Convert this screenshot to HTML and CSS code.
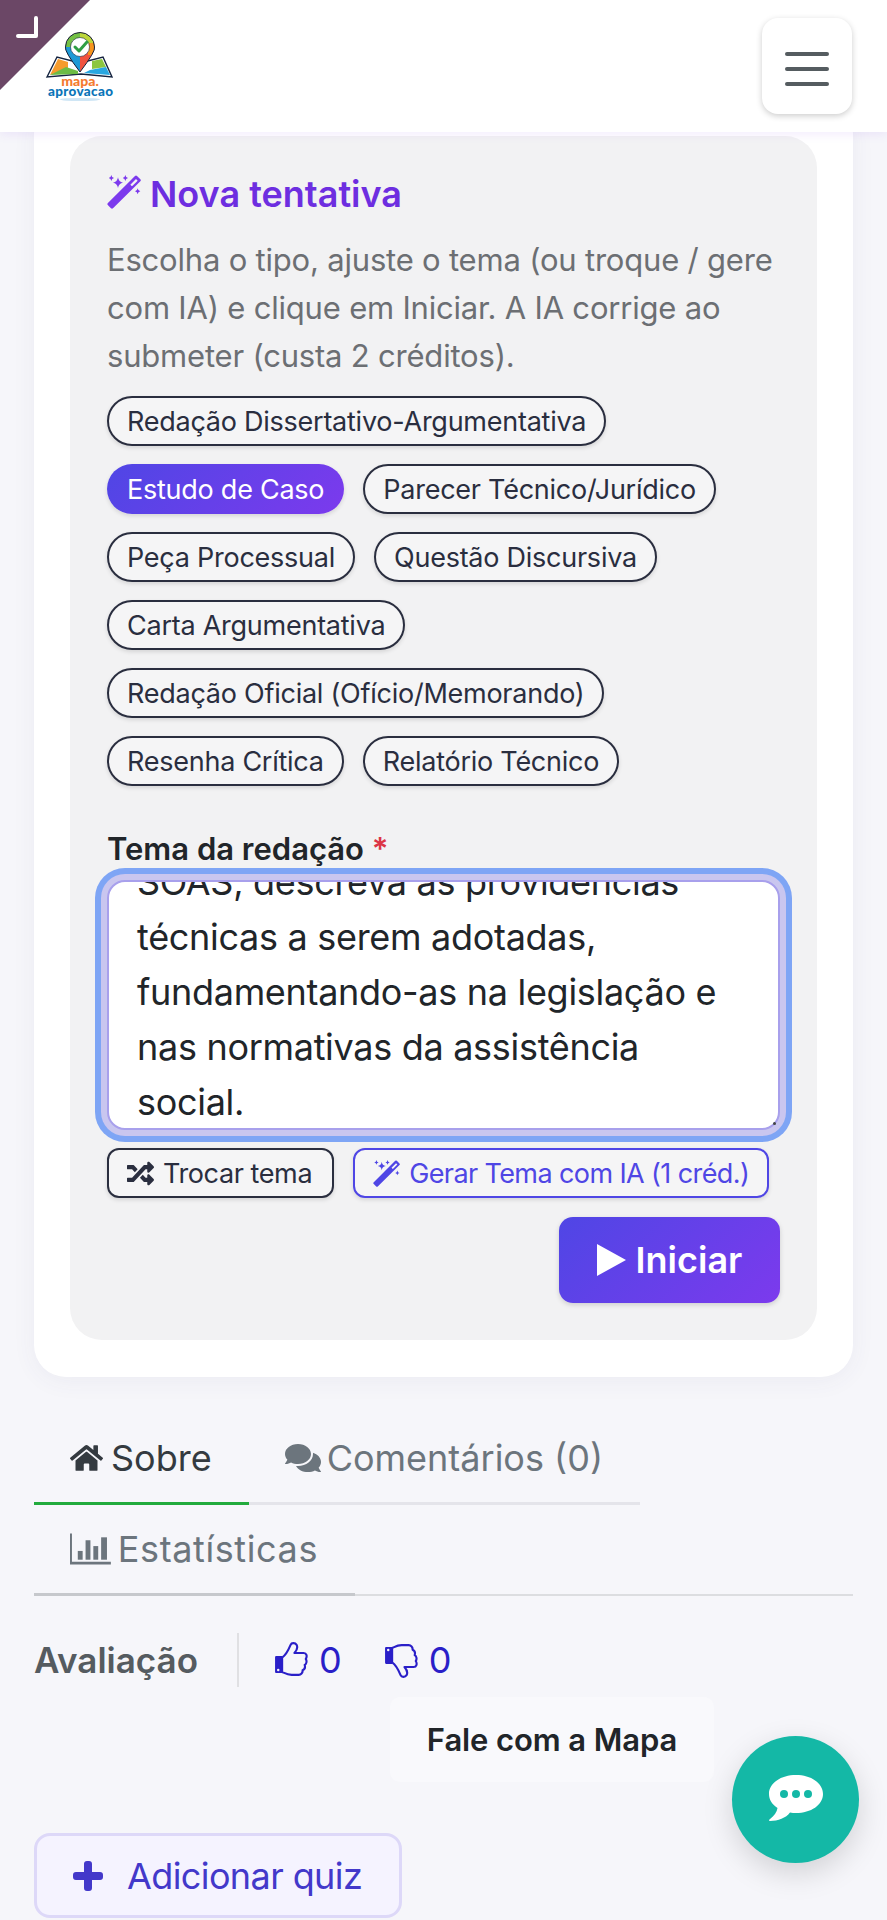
FILE: index.html
```html
<!DOCTYPE html>
<html lang="pt-BR">
<head>
  <meta charset="UTF-8">
  <meta name="viewport" content="width=device-width, initial-scale=1.0">
  <title>Nova tentativa - Mapa da Aprovação</title>
  <link rel="stylesheet" href="styles.css">
</head>
<body>
  <svg class="defs" width="0" height="0" aria-hidden="true">
    <defs>
      <symbol id="i-magic" viewBox="0 0 102 102">
        <path d="M2 85 L84 3 Q87 0 90 3 L100 13 Q103 16 100 19 L18 100 Q15 102 12 100 L3 91 Q0 88 2 85 Z M70 29 L87 12 L92 17 L75 34 Z" fill-rule="evenodd"/>
        <path d="M33 7 Q35 21 48 23 Q35 25 33 39 Q31 25 18 23 Q31 21 33 7 Z M13 0 Q14 8 21 9 Q14 10 13 18 Q12 10 5 9 Q12 8 13 0 Z M55 0 Q56 8 63 9 Q56 10 55 18 Q54 10 47 9 Q54 8 55 0 Z M92 40 Q93 48 100 49 Q93 50 92 58 Q91 50 84 49 Q91 48 92 40 Z"/>
      </symbol>
      <symbol id="i-thumb" viewBox="0 0 102 102">
        <path d="M3 43 Q3 40 6 40 H23 V88 H6 Q3 88 3 85 Z M12 76 A3.500 3.500 0 1 0 12.010 83 A3.500 3.500 0 1 0 12 76 Z" fill-rule="evenodd"/>
        <path d="M23 44 C32 38 42 20 47 8 C50 1 60 2 64 8 C68 15 64 24 58 31 L84 31 C92 31 95 40 90 48 C94 54 92 62 87 65 C89 72 86 78 81 80 C82 88 76 93 70 93 L50 93 C38 93 30 88 23 85 Z" fill="none" stroke="currentColor" stroke-width="6" stroke-linejoin="round"/>
      </symbol>
    </defs>
  </svg>

  <header class="topbar">
    <a class="corner" href="#" aria-label="Recolher">
      <svg width="24" height="24" viewBox="0 0 24 24"><path d="M21 3 V21 H3" fill="none" stroke="#fff" stroke-width="4" stroke-linecap="round" stroke-linejoin="round"/></svg>
    </a>
    <svg class="logo" width="85" height="90" viewBox="37 20 85 90">
      <defs>
        <clipPath id="pinClip"><path d="M80 71 Q64 50 65.500 46 A14.500 14.500 0 1 1 94.500 46 Q96 50 80 71 Z"/></clipPath>
      </defs>
      <path d="M47 76 L57 56 L80 62 L103 56 L112 76 L81 73 Z" fill="#fff" stroke="#14233f" stroke-width="1.400"/>
      <path d="M50 74 L58 58 L68 61 L68 68 Z" fill="#f59b2c"/>
      <path d="M50 74 L66 66 L78 70 L78 73 Z" fill="#6cbb45"/>
      <path d="M92 60 L102 58 L106 66 L92 68 Z" fill="#8cc63f"/>
      <path d="M90 69 L106 66 L110 74 L84 72 Z" fill="#29a7e0"/>
      <g clip-path="url(#pinClip)">
        <rect x="64" y="30" width="32" height="42" fill="#f0523f"/>
        <rect x="64" y="44" width="16" height="28" fill="#1f9ad6"/>
        <rect x="64" y="30" width="16" height="16" fill="#74c044"/>
        <rect x="80" y="30" width="16" height="14" fill="#bcd63a"/>
        <rect x="88" y="42" width="8" height="12" fill="#f7941d"/>
      </g>
      <path d="M80 71 Q64 50 65.500 46 A14.500 14.500 0 1 1 94.500 46 Q96 50 80 71 Z" fill="none" stroke="#14233f" stroke-width="1"/>
      <circle cx="80" cy="46" r="9.500" fill="#fff" stroke="#14233f" stroke-width=".6"/>
      <path d="M75 46 L79 50 L87 41" fill="none" stroke="#2f9e44" stroke-width="3" stroke-linecap="round" stroke-linejoin="round"/>
      <text class="logo-top" x="80" y="85" text-anchor="middle">mapa.</text>
      <text class="logo-bottom" x="80.500" y="95" text-anchor="middle" textLength="65">aprovacao</text>
      <ellipse cx="80" cy="98.500" rx="20" ry="1.600" fill="#cfe6f5"/>
    </svg>
    <button class="burger" aria-label="Menu"><span></span><span></span><span></span></button>
  </header>

  <main class="page">
    <section class="card">
      <div class="panel">
        <h2 class="panel-title"><svg class="ico-title"><use href="#i-magic"/></svg>Nova tentativa</h2>
        <p class="panel-desc">Escolha o tipo, ajuste o tema (ou troque / gere com IA) e clique em Iniciar. A IA corrige ao submeter (custa 2 créditos).</p>

        <div class="chips">
          <button class="chip">Redação Dissertativo-Argumentativa</button>
          <button class="chip chip-active">Estudo de Caso</button>
          <button class="chip">Parecer Técnico/Jurídico</button>
          <button class="chip">Peça Processual</button>
          <button class="chip">Questão Discursiva</button>
          <button class="chip">Carta Argumentativa</button>
          <button class="chip">Redação Oficial (Ofício/Memorando)</button>
          <button class="chip">Resenha Crítica</button>
          <button class="chip">Relatório Técnico</button>
        </div>

        <label class="field-label">Tema da redação <span class="req">*</span></label>
        <div class="theme-box">
          <div class="theme-text"><div class="theme-lines">SOAS, descreva as providências técnicas a serem adotadas, fundamentando-as na legislação e nas normativas da assistência social.</div></div>
          <span class="grip"></span>
        </div>

        <div class="theme-actions">
          <button class="btn-line btn-dark">
            <svg class="ico-btn" viewBox="0 0 512 512"><path d="M504.971 359.029c9.373 9.373 9.373 24.569 0 33.941l-80 79.984c-15.01 15.01-40.971 4.49-40.971-16.971V416h-58.785a12.004 12.004 0 0 1-8.773-3.812l-70.556-75.596 53.333-57.143L352 336h32v-39.981c0-21.438 25.943-31.998 40.971-16.971l80 79.981zM12 176h84l52.781 56.551 53.333-57.143-70.556-75.596A11.999 11.999 0 0 0 122.785 96H12c-6.627 0-12 5.373-12 12v56c0 6.627 5.373 12 12 12zm372 0v39.984c0 21.46 25.961 31.98 40.971 16.971l80-79.984c9.373-9.373 9.373-24.569 0-33.941l-80-79.981C409.943 24.021 384 34.582 384 56.019V96h-58.785a12.004 12.004 0 0 0-8.773 3.812L96 336H12c-6.627 0-12 5.373-12 12v56c0 6.627 5.373 12 12 12h110.785c3.326 0 6.503-1.381 8.773-3.812L352 176h32z"/></svg>
            Trocar tema
          </button>
          <button class="btn-line btn-indigo">
            <svg class="ico-btn"><use href="#i-magic"/></svg>
            Gerar Tema com IA (1 créd.)
          </button>
        </div>

        <div class="start-row">
          <button class="btn-start">
            <svg class="ico-play" viewBox="0 0 29 32"><path d="M0 0 L29 16 L0 32 Z"/></svg>
            Iniciar
          </button>
        </div>
      </div>
    </section>

    <nav class="tabs">
      <a class="tab tab-active" href="#">
        <svg class="ico-tab" viewBox="0 0 576 512"><path d="M280.37 148.26L96 300.11V464a16 16 0 0 0 16 16l112.06-.29a16 16 0 0 0 15.92-16V368a16 16 0 0 1 16-16h64a16 16 0 0 1 16 16v95.64a16 16 0 0 0 16 16.05L464 480a16 16 0 0 0 16-16V300L295.67 148.26a12.19 12.19 0 0 0-15.3 0zM571.6 251.47L488 182.56V44.05a12 12 0 0 0-12-12h-56a12 12 0 0 0-12 12v72.61L318.47 43a48 48 0 0 0-61 0L4.34 251.47a12 12 0 0 0-1.6 16.9l25.5 31A12 12 0 0 0 45.15 301l235.22-193.74a12.19 12.19 0 0 1 15.3 0L530.9 301a12 12 0 0 0 16.9-1.6l25.5-31a12 12 0 0 0-1.7-16.93z"/></svg>
        Sobre
      </a>
      <a class="tab tab-comments" href="#">
        <svg class="ico-tab ico-wide" viewBox="0 0 576 512"><path d="M416 192c0-88.4-93.1-160-208-160S0 103.6 0 192c0 34.3 14.1 65.9 38 92-13.4 30.2-35.5 54.2-35.8 54.5-2.2 2.3-2.8 5.7-1.5 8.7S4.8 352 8 352c36.6 0 66.9-12.3 88.7-25 32.2 15.7 70.3 25 111.3 25 114.9 0 208-71.6 208-160zm122 220c23.9-26 38-57.7 38-92 0-66.9-53.5-124.2-129.3-148.1.9 6.6 1.3 13.3 1.3 20.1 0 105.9-107.7 192-240 192-10.8 0-21.3-.8-31.7-1.9C207.8 439.6 281.8 480 368 480c41 0 79.1-9.2 111.3-25 21.8 12.7 52.1 25 88.7 25 3.2 0 6.1-1.9 7.3-4.8 1.3-2.9.7-6.3-1.5-8.7-.3-.3-22.4-24.2-35.8-54.5z"/></svg>
        Comentários (0)
      </a>
      <a class="tab tab-last" href="#">
        <svg class="ico-tab ico-chart" viewBox="0 0 42 32"><path d="M0 0 H2 V29 H42 V32 H0 Z"/><rect x="8" y="18" width="5" height="9"/><rect x="16" y="7" width="5" height="20"/><rect x="24" y="13" width="5" height="14"/><rect x="32" y="4" width="6" height="23"/></svg>
        Estatísticas
      </a>
    </nav>

    <div class="rating">
      <span class="rating-label">Avaliação</span>
      <span class="rating-sep"></span>
      <span class="vote"><svg class="ico-vote"><use href="#i-thumb"/></svg>0</span>
      <span class="vote"><svg class="ico-vote ico-down"><use href="#i-thumb"/></svg>0</span>
    </div>

    <button class="btn-quiz">
      <svg class="ico-plus" viewBox="0 0 30 30"><path d="M11 3 Q11 0 14 0 H16 Q19 0 19 3 V11 H27 Q30 11 30 14 V16 Q30 19 27 19 H19 V27 Q19 30 16 30 H14 Q11 30 11 27 V19 H3 Q0 19 0 16 V14 Q0 11 3 11 H11 Z"/></svg>
      Adicionar quiz
    </button>
  </main>

  <div class="chat-hint">Fale com a Mapa</div>
  <button class="chat-fab" aria-label="Fale com a Mapa">
    <svg width="56" height="47" viewBox="0 0 56 47"><path d="M28 0 C43 0 55 8 55 19 C55 30 43 38 28 38 C26 38 24 38 22 37.500 C18 43 10 46 2 46 C1 46 0.500 45 1.500 44.500 C6 41 9 37 9.500 33 C4 29.500 1 24.500 1 19 C1 8 13 0 28 0 Z" fill="#fff"/><circle cx="16" cy="19" r="4" fill="#14b8a6"/><circle cx="28" cy="19" r="4" fill="#14b8a6"/><circle cx="40" cy="19" r="4" fill="#14b8a6"/></svg>
  </button>
</body>
</html>
```

FILE: styles.css
```css
* {
  box-sizing: border-box;
}
body {
  margin: 0;
  background-color: #f6f6fa;
  font-family: Inter, "Noto Sans", sans-serif;
  color: #212529;
}
button {
  font-family: inherit;
  cursor: pointer;
}
.defs {
  position: absolute;
}

/* top bar */
.topbar {
  position: relative;
  z-index: 10;
  height: 132px;
  display: flex;
  align-items: center;
  justify-content: space-between;
  padding: 0 35px 0 37px;
  background: #fff;
  box-shadow: 0 2px 10px rgba(124, 58, 237, 0.1);
}
.corner {
  position: absolute;
  top: 0;
  left: 0;
  width: 90px;
  height: 90px;
  padding: 15px;
  background: #6b4766;
  clip-path: polygon(0 0, 100% 0, 0 100%);
}
.corner svg {
  display: block;
}
.logo-top {
  font: 900 14px Lato, sans-serif;
  fill: #f47b30;
}
.logo-bottom {
  font: 900 13.500px Lato, sans-serif;
  fill: #0b75b9;
}
.burger {
  width: 90px;
  height: 96px;
  display: flex;
  flex-direction: column;
  align-items: center;
  justify-content: center;
  gap: 11px;
  padding: 6px 0 0;
  margin-top: -1px;
  background: #fff;
  border: 0;
  border-radius: 16px;
  box-shadow: 0 2px 6px rgba(0, 0, 0, 0.2);
}
.burger span {
  width: 44px;
  height: 4px;
  background: #555c60;
  border-radius: 2px;
}

/* attempt card */
.page {
  padding: 0 34px;
}
.card {
  margin-top: -30px;
  padding: 34px 36px 37px;
  background: #fff;
  border-radius: 32px;
  box-shadow: 0 4px 24px rgba(70, 70, 120, 0.06);
}
.panel {
  padding: 37px;
  background: #f2f2f3;
  border-radius: 32px;
}
.panel-title {
  display: flex;
  align-items: center;
  gap: 9px;
  margin: 0;
  height: 42px;
  font-size: 36px;
  font-weight: 600;
  color: #6d2ee0;
}
.ico-title {
  width: 34px;
  height: 34px;
  margin-top: -4px;
  fill: #7c3aed;
}
.panel-desc {
  margin: 21px 0 16px;
  font-size: 31px;
  line-height: 48px;
  letter-spacing: -0.2px;
  color: #6c6f73;
}

/* type chips */
.chips {
  display: flex;
  flex-wrap: wrap;
  gap: 18px 19px;
}
.chip {
  height: 50px;
  padding: 0 18px;
  font-size: 27px;
  letter-spacing: -0.25px;
  white-space: nowrap;
  color: #2a2e3f;
  background: #f5f5f6;
  border: 2px solid #2a2e3f;
  border-radius: 25px;
  box-shadow: 0 2px 4px rgba(0, 0, 0, 0.12);
}
.chip-active {
  color: #fff;
  background: linear-gradient(135deg, #4f46e5, #7c3aed);
  border-color: transparent;
  background-origin: border-box;
}

/* theme field */
.field-label {
  display: block;
  margin-top: 40px;
  margin-bottom: 9px;
  font-size: 31px;
  font-weight: 600;
  line-height: 45px;
  color: #212529;
}
.req {
  color: #dc3545;
}
.theme-box {
  position: relative;
  height: 250px;
  background: #fff;
  border: 2px solid #a8a0ec;
  border-radius: 18px;
  box-shadow: 0 0 0 6px #c9c6ef, 0 0 0 12px #7ea5f5;
}
.theme-text {
  height: 246px;
  display: flex;
  align-items: flex-end;
  padding: 0 44px 0 28px;
  overflow: hidden;
  font-size: 36px;
  line-height: 55px;
  letter-spacing: -0.3px;
  color: #212529;
}
.theme-lines {
  margin-bottom: -2px;
}
.grip {
  position: absolute;
  right: 2px;
  bottom: 3px;
  width: 3px;
  height: 3px;
  border-radius: 50%;
  background: #444;
}
.theme-actions {
  display: flex;
  gap: 19px;
  margin-top: 18px;
}
.btn-line {
  height: 50px;
  display: flex;
  align-items: center;
  gap: 9px;
  padding: 0 18px;
  font-size: 27px;
  letter-spacing: -0.4px;
  white-space: nowrap;
  color: #2a2e3f;
  background: #f5f5f6;
  border: 2px solid #2a2e3f;
  border-radius: 12px;
  box-shadow: 0 2px 4px rgba(0, 0, 0, 0.12);
}
.btn-dark {
  padding-right: 20px;
}
.btn-indigo {
  letter-spacing: -0.6px;
  color: #4f46e5;
  border-color: #4f46e5;
}
.ico-btn {
  width: 27px;
  height: 27px;
  fill: currentColor;
}
.start-row {
  display: flex;
  justify-content: flex-end;
  margin-top: 19px;
}
.btn-start {
  width: 221px;
  height: 86px;
  display: flex;
  align-items: center;
  justify-content: center;
  gap: 10px;
  font-size: 36px;
  font-weight: 600;
  color: #fff;
  background: linear-gradient(135deg, #4f46e5, #7c3aed);
  border: 0;
  border-radius: 14px;
  box-shadow: 0 2px 5px rgba(0, 0, 0, 0.15);
}
.ico-play {
  width: 29px;
  height: 32px;
  fill: #fff;
}

/* tabs */
.tabs {
  display: flex;
  flex-wrap: wrap;
  margin-top: 37px;
  border-bottom: 2px solid #dcdde0;
}
.tab {
  height: 91px;
  display: flex;
  align-items: center;
  gap: 8px;
  padding: 0 37px 0 36px;
  font-size: 36px;
  text-decoration: none;
  color: #6c757d;
  border-bottom: 3px solid #e4e4ea;
}
.tab-active {
  color: #343a40;
  border-bottom-color: #22ab3d;
}
.tab-comments {
  gap: 6px;
}
.tab-last {
  width: 321px;
  gap: 7px;
  margin-bottom: -2px;
  letter-spacing: 0.6px;
  border-bottom-color: #c6c8cc;
}
.ico-tab {
  width: 33px;
  height: 30px;
  fill: currentColor;
}
.ico-wide {
  width: 36px;
  height: 32px;
}
.ico-chart {
  width: 42px;
  height: 32px;
}

/* rating */
.rating {
  display: flex;
  align-items: center;
  height: 54px;
  margin-top: 37px;
  font-size: 36px;
}
.rating-label {
  font-size: 35px;
  font-weight: 600;
  color: #555b60;
}
.rating-sep {
  width: 2px;
  height: 54px;
  margin: 0 35px 0 39px;
  background: #e0e0e3;
}
.vote {
  display: flex;
  align-items: center;
  gap: 9px;
  margin-right: 42px;
  color: #2a1fc8;
}
.ico-vote {
  width: 36px;
  height: 36px;
  fill: currentColor;
}
.ico-down {
  transform: scaleY(-1);
}

/* add quiz */
.btn-quiz {
  display: flex;
  align-items: center;
  gap: 24px;
  width: 368px;
  height: 85px;
  margin-top: 146px;
  padding: 0 36px;
  font-size: 36px;
  letter-spacing: -0.6px;
  color: #4338ca;
  background: #f5f3ff;
  border: 3px solid #ddd8f8;
  border-radius: 16px;
}
.ico-plus {
  width: 30px;
  height: 30px;
  fill: #4338ca;
}

/* floating chat */
.chat-hint {
  position: fixed;
  top: 1697px;
  left: 390px;
  width: 324px;
  height: 85px;
  display: flex;
  align-items: center;
  justify-content: center;
  font-size: 31px;
  font-weight: 600;
  letter-spacing: -0.1px;
  background: #f9f9fc;
  border-radius: 10px;
}
.chat-fab {
  position: fixed;
  top: 1736px;
  left: 732px;
  width: 127px;
  height: 127px;
  display: flex;
  align-items: center;
  justify-content: center;
  padding: 0 0 3px;
  background: #14b8a6;
  border: 0;
  border-radius: 50%;
  box-shadow: 0 10px 30px rgba(0, 0, 0, 0.15);
}
```
